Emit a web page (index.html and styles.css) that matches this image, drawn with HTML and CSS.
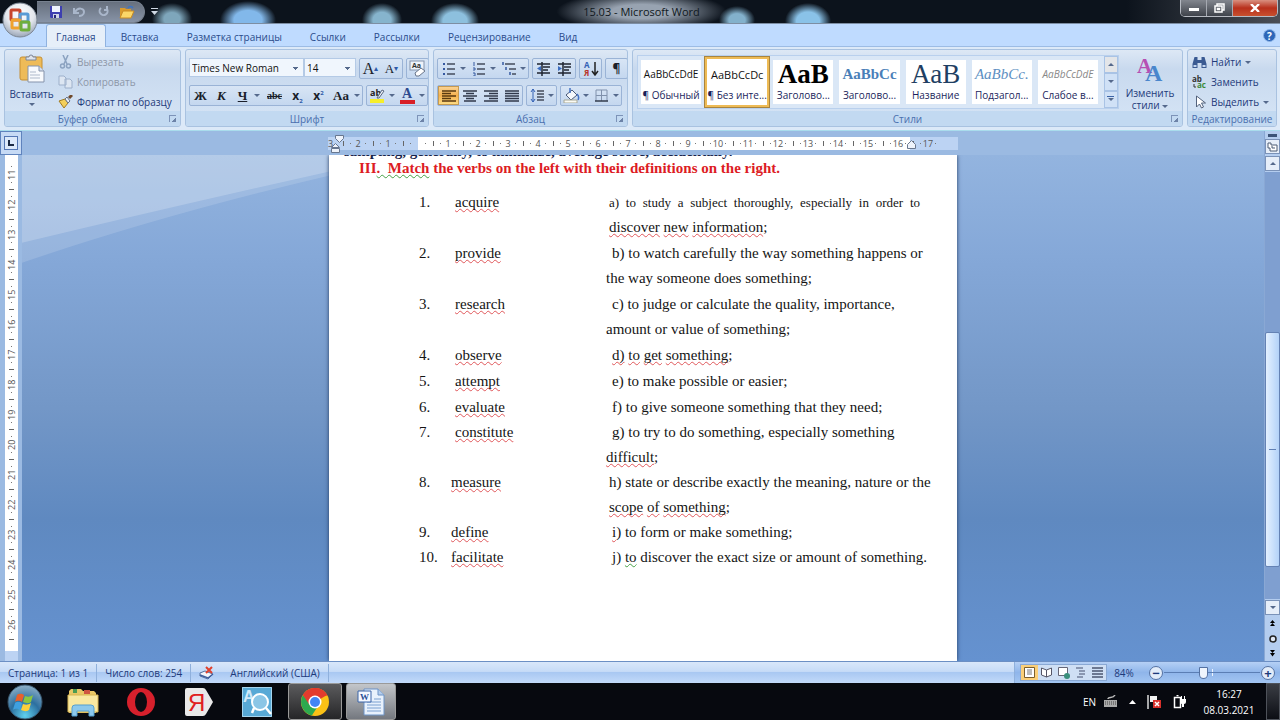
FILE: index.html
```html
<!DOCTYPE html>
<html lang="ru">
	<head>
		<meta charset="utf-8" />
		<title>15.03 - Microsoft Word</title>
		<link rel="stylesheet" href="styles.css">
	</head>
	<body>
		<header class="titlebar">
			<button class="office" aria-label="Office">
				<svg width="36" height="36" viewBox="0 0 36 36"><defs><radialGradient id="orb" cx=".5" cy=".3" r=".7"><stop offset="0" stop-color="#fff"/><stop offset=".6" stop-color="#e3e6ec"/><stop offset="1" stop-color="#9aa6b8"/></radialGradient></defs><circle cx="18" cy="18" r="17" fill="url(#orb)" stroke="#7d8794"/><g fill="none" stroke-width="3"><rect x="9" y="8" width="9" height="10" rx="1" stroke="#c8452c"/><rect x="18" y="12" width="8" height="8" rx="1" stroke="#5a9bd5"/><rect x="10" y="18" width="8" height="8" rx="1" stroke="#f0a22e"/><rect x="19" y="20" width="8" height="8" rx="1" stroke="#6fae3c"/></g></svg>
			</button>
			<div class="quick">
				<button aria-label="Сохранить"><svg width="14" height="14" viewBox="0 0 14 14"><path d="M1 1h12v12H2l-1-1z" fill="#3d3fb0"/><path d="M3 1h8v6H3z" fill="#eef3ff"/><path d="M4 9h6v4H4z" fill="#cfd6e6"/><path d="M5 10h2v3H5z" fill="#26277a"/></svg></button>
				<button aria-label="Отменить"><svg width="16" height="12" viewBox="0 0 16 12" fill="none" stroke="#a9b6ca" stroke-width="2"><path d="M2 2v5h5M3 6c3-5 9-4 9 0 0 3-3 4-5 4"/></svg></button>
				<button aria-label="Вернуть"><svg width="12" height="12" viewBox="0 0 12 12" fill="none" stroke="#a9b6ca" stroke-width="2"><path d="M3 2a4 4 0 1 0 6 1M9 0v4H6"/></svg></button>
				<button aria-label="Открыть"><svg width="16" height="14" viewBox="0 0 16 14"><path d="M1 3h5l1 1h5v3H4l-3 6z" fill="#d99a2b"/><path d="M4 6h11l-3 7H1z" fill="#fbd768" stroke="#c98b23"/><path d="M9 3c1-2 4-2 5 0" fill="none" stroke="#3b73c4" stroke-width="1.5"/></svg></button>
			</div>
			<button class="more" aria-label="Настройка панели"><svg width="7" height="7" viewBox="0 0 7 7"><path d="M0 0h7v1H0zM0 3h7L3.500 7z" fill="#cfd8e4"/></svg></button>
			<h1>15.03 - Microsoft Word</h1>
			<div class="winbtns">
				<button aria-label="Свернуть"><svg width="10" height="8" viewBox="0 0 10 8"><path d="M0 4h10v3H0z" fill="#fff"/></svg></button>
				<button aria-label="Развернуть"><svg width="11" height="10" viewBox="0 0 11 10" fill="none" stroke="#fff" stroke-width="1.500"><path d="M3 3V1h7v6H8M1 3h7v6H1zM3.500 5.500h2v1h-2z"/></svg></button>
				<button class="close" aria-label="Закрыть"><svg width="10" height="8" viewBox="0 0 10 8" stroke="#fff" stroke-width="2.400"><path d="M1 0l8 8M9 0L1 8"/></svg></button>
			</div>
		</header>

		<nav class="tabs">
			<a href="#" class="current">Главная</a>
			<a href="#">Вставка</a>
			<a href="#">Разметка страницы</a>
			<a href="#">Ссылки</a>
			<a href="#">Рассылки</a>
			<a href="#">Рецензирование</a>
			<a href="#">Вид</a>
			<button class="help" aria-label="Справка">?</button>
		</nav>

		<section class="ribbon">
			<div class="group clipboard">
				<div class="body">
					<button class="paste">
						<svg width="26" height="29" viewBox="0 0 26 29"><rect x="1" y="3" width="22" height="23" rx="2" fill="#eebb58" stroke="#c58f34"/><path d="M7 5V3h3a2 2 0 0 1 4 0h3v3H7z" fill="#dfe3ea" stroke="#7b8598"/><path d="M9 12h11l5 5v11H9z" fill="#f8fafd" stroke="#8593ab"/><path d="M20 12v5h5" fill="#d5deeb" stroke="#8593ab"/><path d="M11 18h6M11 21h10M11 24h10" stroke="#aeb9ca"/></svg>
						<span>Вставить</span><i class="arr"></i>
					</button>
					<div class="stack">
						<button class="off"><svg width="15" height="14" viewBox="0 0 15 14" fill="none" stroke="#8ba2c0" stroke-width="1.500"><path d="M5 0l4 9M10 0L6 9"/><circle cx="4.500" cy="11" r="2"/><circle cx="10.500" cy="11" r="2"/></svg>Вырезать</button>
						<button class="off"><svg width="15" height="14" viewBox="0 0 15 14" fill="#dde6f2" stroke="#9db0cb"><path d="M1 1h5l2 2v7H1zM7 4h5l2 2v7H7z"/></svg>Копировать</button>
						<button><svg width="15" height="14" viewBox="0 0 15 14"><path d="M1 6l6-2 3 4-4 5z" fill="#f3cf5c" stroke="#a17b22"/><path d="M7 4l3 4 2-2-3-4z" fill="#e8edf5" stroke="#66748b"/><path d="M11 3l3-3" stroke="#704a2b" stroke-width="3"/></svg>Формат по образцу</button>
					</div>
				</div>
				<div class="caption">Буфер обмена<i class="launch"></i></div>
			</div>

			<div class="group font">
				<div class="body rows">
					<div class="row">
						<div class="combos">
							<select class="face" aria-label="Шрифт"><option>Times New Roman</option></select>
							<select class="size" aria-label="Размер шрифта"><option>14</option></select>
						</div>
						<div class="box"><button class="serif big">A<sup>▴</sup></button><button class="serif">A<sup>▾</sup></button></div>
						<div class="box"><button aria-label="Очистить формат"><svg width="18" height="17" viewBox="0 0 18 17"><rect x="1" y="1" width="14" height="9" fill="#eef3fa" stroke="#8493ab"/><text x="3" y="8" class="tiny">Aa</text><path d="M6 13l6-5 4 3-6 5H7z" fill="#fff" stroke="#69758a"/></svg></button></div>
					</div>
					<div class="row">
						<div class="box">
							<button class="serif"><b>Ж</b></button><button class="serif"><b><em>К</em></b></button><button class="serif"><b><u>Ч</u></b></button><i class="arr"></i><button class="serif small wide"><b><s>abc</s></b></button><button class="sub"><b>x<sub>2</sub></b></button><button class="sub"><b>x<sup>2</sup></b></button><button class="serif aa"><b>Aa</b></button><i class="arr"></i>
						</div>
						<div class="box">
							<button aria-label="Цвет выделения"><svg width="17" height="17" viewBox="0 0 17 17"><text x="1" y="9" class="ab">ab</text><path d="M8 11l5-8 2 1-5 7z" fill="#eef3fa" stroke="#5a6780"/><path d="M1 12h14v4H1z" fill="#f6ee2a"/></svg></button><i class="arr"></i>
							<button aria-label="Цвет текста"><svg width="17" height="17" viewBox="0 0 17 17"><text x="3" y="11" class="colora">A</text><path d="M1 13h15v4H1z" fill="#d81f26"/></svg></button><i class="arr"></i>
						</div>
					</div>
				</div>
				<div class="caption">Шрифт<i class="launch"></i></div>
			</div>

			<div class="group para">
				<div class="body rows">
					<div class="row">
						<div class="box">
							<button aria-label="Маркеры"><svg width="14" height="14" viewBox="0 0 14 14"><path d="M1 1h2v2H1zM1 6h2v2H1zM1 11h2v2H1z" fill="#3558a0"/><path d="M5 2h8M5 7h8M5 12h8" stroke="#444c5c" stroke-width="1.500"/></svg></button><i class="arr"></i>
							<button aria-label="Нумерация"><svg width="14" height="14" viewBox="0 0 14 14"><path d="M2 0v4M1 6h2v2H1M1 11h2v3H1" fill="none" stroke="#3558a0"/><path d="M5 2h8M5 7h8M5 12h8" stroke="#444c5c" stroke-width="1.500"/></svg></button><i class="arr"></i>
							<button aria-label="Многоуровневый список"><svg width="16" height="14" viewBox="0 0 16 14"><path d="M2 0v3M5 5v3M9 10v3" stroke="#3558a0" stroke-width="1.500"/><path d="M4 2h10M8 7h7M11 12h4" stroke="#444c5c" stroke-width="1.500"/></svg></button><i class="arr"></i>
						</div>
						<div class="box"><button aria-label="Уменьшить отступ"><svg width="15" height="14" viewBox="0 0 15 14"><path d="M1 2h13M7 5h7M7 8h5M1 11h13M6 0v14" stroke="#1f2530" stroke-width="1.500"/><path d="M5 4v5L1 6.500z" fill="#3b6cc0"/></svg></button><button aria-label="Увеличить отступ"><svg width="15" height="14" viewBox="0 0 15 14"><path d="M1 2h13M7 5h7M7 8h5M1 11h13M6 0v14" stroke="#1f2530" stroke-width="1.500"/><path d="M1 4v5l4-2.500z" fill="#3b6cc0"/></svg></button></div>
						<div class="box"><button aria-label="Сортировка"><svg width="16" height="18" viewBox="0 0 16 18"><text x="1" y="8" class="sorta">А</text><text x="1" y="16" class="sortb">Я</text><path d="M12 2v12M9 11l3 4 3-4" fill="none" stroke="#222" stroke-width="1.500"/></svg></button></div>
						<div class="box"><button><b>¶</b></button></div>
					</div>
					<div class="row">
						<div class="box">
							<button class="on" aria-label="По левому краю"><svg width="14" height="12" viewBox="0 0 14 12"><path d="M0 1h14M0 3.500h9M0 6h14M0 8.500h9M0 11h14" stroke="#5a3a10" stroke-width="1.500"/></svg></button><button aria-label="По центру"><svg width="14" height="12" viewBox="0 0 14 12"><path d="M0 1h14M3 3.500h8M0 6h14M3 8.500h8M1 11h12" stroke="#30384a" stroke-width="1.500"/></svg></button><button aria-label="По правому краю"><svg width="14" height="12" viewBox="0 0 14 12"><path d="M0 1h14M5 3.500h9M0 6h14M5 8.500h9M0 11h14" stroke="#30384a" stroke-width="1.500"/></svg></button><button aria-label="По ширине"><svg width="14" height="12" viewBox="0 0 14 12"><path d="M0 1h14M0 3.500h14M0 6h14M0 8.500h14M0 11h14" stroke="#30384a" stroke-width="1.500"/></svg></button>
						</div>
						<div class="box"><button class="narrow" aria-label="Интервал"><svg width="14" height="15" viewBox="0 0 14 15"><path d="M3 1v13M1 4l2-3 2 3M1 11l2 3 2-3" fill="none" stroke="#3562b5"/><path d="M7 3h7M7 6h7M7 9h7M7 12h7" stroke="#444c5c" stroke-width="1.500"/></svg></button><i class="arr"></i></div>
						<div class="box"><button aria-label="Заливка"><svg width="17" height="15" viewBox="0 0 17 15"><path d="M3 7l6-5 5 5-6 5z" fill="#f5f8fc" stroke="#4a5a78"/><path d="M7 5V0M14 6c2 2 2 4 1 6" fill="none" stroke="#4473c5" stroke-width="1.500"/><path d="M1 12h13v3H1z" fill="#fbfbf4" stroke="#a8a897"/></svg></button><i class="arr"></i><button aria-label="Границы"><svg width="13" height="13" viewBox="0 0 13 13" fill="none"><path d="M1 1h11v11M1 1v11M6.500 1v11M1 6.500h11" stroke="#8091ac"/><path d="M0 12h13" stroke="#333b4c" stroke-width="1.500"/></svg></button><i class="arr"></i></div>
					</div>
				</div>
				<div class="caption">Абзац<i class="launch"></i></div>
			</div>

			<div class="group styles">
				<div class="body">
					<div class="gallery">
						<button><span class="sample">AaBbCcDdE</span><span>¶ Обычный</span></button>
						<button class="picked"><span class="sample">AaBbCcDc</span><span>¶ Без инте...</span></button>
						<button><span class="sample h1">AaB</span><span>Заголово...</span></button>
						<button><span class="sample h2">AaBbCc</span><span>Заголово...</span></button>
						<button><span class="sample ttl">AaB</span><span>Название</span></button>
						<button><span class="sample subt">AaBbCc.</span><span>Подзагол...</span></button>
						<button><span class="sample weak">AaBbCcDdE</span><span>Слабое в...</span></button>
						<div class="spin"><button aria-label="Вверх"><i class="arr up"></i></button><button aria-label="Вниз"><i class="arr"></i></button><button class="all" aria-label="Ещё"><i class="arr"></i></button></div>
					</div>
					<button class="change"><svg width="30" height="28" viewBox="0 0 30 28"><text x="2" y="18" class="a1">A</text><text x="10" y="26" class="a2">A</text></svg><span>Изменить<br>стили <i class="arr"></i></span></button>
				</div>
				<div class="caption">Стили<i class="launch"></i></div>
			</div>

			<div class="group edit">
				<div class="body">
					<div class="stack">
						<button><svg width="15" height="13" viewBox="0 0 14 13" fill="#3a5a92"><path d="M2 1h3v3h4V1h3l2 7v4H9V7H5v5H0V8z"/><path d="M1 9h3v2H1zM10 9h3v2h-3z" fill="#c4d6f0"/></svg>Найти <i class="arr"></i></button>
						<button><svg width="15" height="14" viewBox="0 0 15 14"><text x="0" y="7" class="rep">ab</text><text x="5" y="13" class="rep g">ac</text><path d="M2 9v3h2" fill="none" stroke="#333"/></svg>Заменить</button>
						<button><svg width="15" height="14" viewBox="0 0 14 14"><path d="M4 1v11l3-3 2 4 2-1-2-4h4z" fill="#fff" stroke="#53627c"/></svg>Выделить <i class="arr"></i></button>
					</div>
				</div>
				<div class="caption">Редактирование</div>
			</div>
		</section>

		<main class="work">
			<div class="leftcol">
				<button class="corner" aria-label="Табуляция"><b><svg width="6" height="6" viewBox="0 0 6 6"><path d="M1 0v5h5" fill="none" stroke="#1b2a44" stroke-width="2"/></svg></b></button>
				<div class="vruler"><i>11</i><i>12</i><i>13</i><i>14</i><i>15</i><i>16</i><i>17</i><i>18</i><i>19</i><i>20</i><i>21</i><i>22</i><i>23</i><i>24</i><i>25</i><i>26</i></div>
			</div>
			<div class="midcol">
				<div class="hruler">
					<div class="scale"><i class="edge">3</i><i>2</i><i>1</i><i></i><i>1</i><i>2</i><i>3</i><i>4</i><i>5</i><i>6</i><i>7</i><i>8</i><i>9</i><i>10</i><i>11</i><i>12</i><i>13</i><i>14</i><i>15</i><i>16</i><i>17</i>
						<svg class="indent first" width="13" height="19" viewBox="0 0 13 19" fill="#eef3fb" stroke="#68778f"><path d="M4.500.5h8v3l-4 4-4-4zM.5 12.500l4-4 4 4zM.5 13.500h8v4h-8z"/></svg>
						<svg class="indent last" width="9" height="9" viewBox="0 0 9 9" fill="#eef3fb" stroke="#68778f"><path d="M.5 8.500v-4l4-4 4 4v4z"/></svg>
					</div>
				</div>
				<div class="canvas">
					<svg class="wave" viewBox="0 0 1243 507" preserveAspectRatio="none"><path d="M0 0H620L310 16Q150 52 0 88z" fill="#fff" opacity=".2"/><path d="M0 0H620L310 20Q140 60 0 108z" fill="#fff" opacity=".14"/></svg>
					<article class="page">
						<p class="cut">sampling, generally, to minimize, average score, accidentally.</p>
						<h2>III<span class="gr">.&nbsp; Match</span> the verbs on the left with their definitions on the right.</h2>
						<table>
							<tr><td>1.</td><td><u>acquire</u></td><td class="in"><span class="spread">a) to study a subject thoroughly, especially in order to</span><u>discover</u> <u>new</u> <u>information</u>;</td></tr>
							<tr><td>2.</td><td><u>provide</u></td><td class="hang">b) to watch carefully the way something happens or<br>the way someone does something;</td></tr>
							<tr><td>3.</td><td><u>research</u></td><td class="hang">c) to judge or calculate the quality, importance,<br>amount or value of something;</td></tr>
							<tr><td>4.</td><td><u>observe</u></td><td class="hang"><u>d)</u> <u>to</u> <u>get</u> <u>something</u>;</td></tr>
							<tr><td>5.</td><td><u>attempt</u></td><td class="hang">e) to make possible or easier;</td></tr>
							<tr><td>6.</td><td><u>evaluate</u></td><td class="hang">f) to give someone something that they need;</td></tr>
							<tr><td>7.</td><td><u>constitute</u></td><td class="hang">g) to try to do something, especially something<br><u>difficult</u>;</td></tr>
							<tr class="shift"><td>8.</td><td><u>measure</u></td><td class="in">h) state or describe exactly the meaning, nature or the<br><u>scope</u> <u>of</u> <u>something</u>;</td></tr>
							<tr class="shift"><td>9.</td><td><u>define</u></td><td class="hang"><u>i</u>) to form or make something;</td></tr>
							<tr class="shift"><td>10.</td><td><u>facilitate</u></td><td class="hang">j) <span class="gr">to</span> discover the exact size or amount of something.</td></tr>
						</table>
					</article>
				</div>
			</div>
			<div class="scroll">
				<i class="split"></i>
				<button aria-label="Линейка"><svg width="11" height="10" viewBox="0 0 11 10" fill="#fff" stroke="#4d5c75"><path d="M1 1h3v2h6v6H3V6H1zM5 4v2h3"/></svg></button>
				<button aria-label="Вверх"><i class="arr up"></i></button>
				<div class="track"><div class="thumb"></div></div>
				<button aria-label="Вниз"><i class="arr"></i></button>
				<button class="flat" aria-label="Предыдущая"><svg width="7" height="7" viewBox="0 0 7 7"><path d="M3.500 0L6 3H1zM3.500 3L6 6H1z"/></svg></button>
				<button class="flat" aria-label="Выбор объекта"><svg width="8" height="8" viewBox="0 0 8 8"><circle cx="4" cy="4" r="3" fill="#dfe8f5" stroke="#222" stroke-width="1.500"/></svg></button>
				<button class="flat" aria-label="Следующая"><svg width="7" height="7" viewBox="0 0 7 7"><path d="M3.500 3L6 0H1zM3.500 6.500L6 3H1z"/></svg></button>
			</div>
		</main>

		<footer class="status">
			<span>Страница: 1 из 1</span>
			<span>Число слов: 254</span>
			<span class="lang"><svg width="16" height="14" viewBox="0 0 16 14"><path d="M1 7l5-2 8 3-5 5-8-3z" fill="#f3f6fb" stroke="#56719f"/><path d="M1 9l8 3 5-4" fill="none" stroke="#3e5f9e" stroke-width="1.500"/><path d="M7 1l6 6M13 1L7 7" stroke="#e0402c" stroke-width="2"/></svg>Английский (США)</span>
			<div class="right">
				<div class="views">
					<button class="on" aria-label="Разметка"><svg width="11" height="11" viewBox="0 0 11 11"><path d="M.5.5h10v10H.5z" fill="#fff" stroke="#7b5f2d"/><path d="M3 3h5M3 5h5M3 7h5" stroke="#777"/></svg></button>
					<button aria-label="Чтение"><svg width="12" height="11" viewBox="0 0 12 11"><path d="M.5 1l5 2 5-2v7l-5 2-5-2zM5.500 3v7" fill="#fff" stroke="#556"/></svg></button>
					<button aria-label="Веб"><svg width="12" height="12" viewBox="0 0 12 12"><path d="M.5.5h9v8h-9z" fill="#fff" stroke="#667"/><circle cx="9" cy="9" r="3" fill="#3a8f7b"/></svg></button>
					<button aria-label="Структура"><svg width="11" height="11" viewBox="0 0 11 11"><path d="M1 1h7M4 4h6M4 7h6M2 10h6" stroke="#74809a" stroke-width="1.500"/></svg></button>
					<button aria-label="Черновик"><svg width="11" height="11" viewBox="0 0 11 11"><path d="M0 1h11M0 4h11M0 7h11M0 10h11" stroke="#6c7891" stroke-width="2"/></svg></button>
				</div>
				<button class="pct">84%</button>
				<button class="round" aria-label="Уменьшить">−</button>
				<input type="range" min="0" max="100" value="40" aria-label="Масштаб">
				<button class="round" aria-label="Увеличить">+</button>
			</div>
		</footer>

		<footer class="taskbar">
			<button class="task start" aria-label="Пуск"><svg width="36" height="36" viewBox="0 0 36 36"><defs><radialGradient id="st" cx=".5" cy=".9" r=".9"><stop offset="0" stop-color="#5fd0ee"/><stop offset=".5" stop-color="#2c6f9f"/><stop offset="1" stop-color="#8fb0c8"/></radialGradient></defs><circle cx="18" cy="18" r="17" fill="url(#st)" stroke="#36546b"/><path d="M10 11c3-2 5-1 7 0l-2 7c-2-1-4-2-7 0z" fill="#e8602c"/><path d="M18 12c3 1 5 1 8-1l-2 7c-3 2-5 1-8 0z" fill="#8cc63f"/><path d="M8 19c3-2 5-1 7 0l-2 7c-2-1-4-2-7 0z" fill="#3fa0e0"/><path d="M16 20c3 1 5 1 8-1l-2 7c-3 2-5 1-8 0z" fill="#fcd03a"/></svg></button>
			<button class="task" aria-label="Проводник"><svg width="32" height="30" viewBox="0 0 32 30"><path d="M2 4l2-2h10l2 2h11l2 2v20H2z" fill="#e9c765"/><path d="M6 2h4v4H6z" fill="#4c9b52"/><path d="M17 3h6v4h-6z" fill="#cf5540"/><path d="M1 8h30v17H1z" fill="#f9e8a0" stroke="#d8b552"/><path d="M5 29v-8q0-3 3-3h16q3 0 3 3v8h-5v-5H10v5z" fill="#8cc8ec" stroke="#559fcf"/></svg></button>
			<button class="task" aria-label="Opera"><svg width="30" height="30" viewBox="0 0 30 30"><ellipse cx="15" cy="15" rx="14" ry="14" fill="#d6202c"/><ellipse cx="15" cy="15" rx="6" ry="10" fill="#0a0c12"/></svg></button>
			<button class="task" aria-label="Яндекс"><svg width="30" height="30" viewBox="0 0 30 30"><path d="M3 1h16q2 0 3 2l7 12-7 12q-1 2-3 2H3q-2 0-2-2V3q0-2 2-2z" fill="#e9e9e9"/><text x="4" y="24" class="ya">Я</text></svg></button>
			<button class="task" aria-label="Поиск"><svg width="30" height="30" viewBox="0 0 30 30"><path d="M0 0h30v30H0z" fill="#58a9d6"/><path d="M.5.500h29v29H.5z" fill="none" stroke="#a6d6f0"/><text x="1" y="15" class="aq">A</text><circle cx="18" cy="15" r="8" fill="#8cc6e6" stroke="#fff" stroke-width="2"/><path d="M24 21l5 6M12 21l-2 5" stroke="#fff" stroke-width="2.500"/></svg></button>
			<button class="task open" aria-label="Chrome"><svg width="30" height="30" viewBox="0 0 30 30"><circle cx="15" cy="15" r="14" fill="#fbc116"/><path d="M15 15L2.900 8A14 14 0 0 1 27.100 8z" fill="#e33b2e"/><path d="M2.900 8a14 14 0 0 0 9 20.600L18 19 10 16z" fill="#2da94f"/><path d="M15 8.500h12.500A14 14 0 0 0 2.900 8l6 9z" fill="#e33b2e"/><circle cx="15" cy="15" r="6.500" fill="#fff"/><circle cx="15" cy="15" r="5" fill="#4285f4"/></svg></button>
			<button class="task open active" aria-label="Word"><svg width="28" height="28" viewBox="0 0 28 28"><path d="M7 1h14l6 6v20H7z" fill="#e8f1fc" stroke="#6c93c6"/><path d="M21 1v6h6" fill="#b4cdec" stroke="#6c93c6"/><path d="M10 14h14M10 17h14M10 20h14M10 23h14M17 11h7" stroke="#7ba0d0"/><path d="M1 3h13v11H1z" fill="#f4f8ff" stroke="#3b64a8"/><text x="3" y="12" class="w">W</text></svg></button>
			<div class="tray">
				<span>EN</span>
				<svg width="15" height="13" viewBox="0 0 15 13"><path d="M1 5h13v7H1z" fill="#aaa"/><path d="M2 7h11M2 9h11" stroke="#444" stroke-dasharray="1 1"/><path d="M5 4c0-3 5 0 7-4" fill="none" stroke="#bbb" stroke-width="1.500"/></svg>
				<svg width="7" height="4" viewBox="0 0 7 4"><path d="M0 4h7L3.500 0z" fill="#fff"/></svg>
				<svg width="15" height="14" viewBox="0 0 15 14"><path d="M1 0v14" stroke="#ddd" stroke-width="1.500"/><path d="M3 1h7v6H3z" fill="#f2f2f2"/><path d="M6 5h8v8H6z" fill="#d8302a"/><path d="M8 7l4 4M12 7l-4 4" stroke="#fff" stroke-width="1.500"/></svg>
				<svg width="14" height="14" viewBox="0 0 14 14"><path d="M1.500 2.500h6v10h-6zM3.500.5h2" fill="none" stroke="#fff" stroke-width="1.500"/><path d="M7 4h6v3q0 2-2 2v3H9V9Q7 9 7 7zM8 1h1v3H8zM11 1h1v3h-1z" fill="#fff"/></svg>
			</div>
			<div class="clock">16:27<br>08.03.2021</div>
			<button class="desk" aria-label="Рабочий стол"></button>
		</footer>
	</body>
</html>
```
FILE: styles.css
```css
*{box-sizing:border-box;}
body{margin:0;height:100vh;display:flex;flex-direction:column;overflow:hidden;font:10px/14px "Open Sans","Noto Sans",sans-serif;color:#1e3a7a;background:#bfdbff;}
button{font:inherit;color:inherit;background:none;border:0;padding:0;margin:0;display:flex;align-items:center;justify-content:center;white-space:nowrap;}
svg{display:block;flex:none;}
i{font-style:normal;}
.arr{display:inline-block;flex:none;border:3px solid transparent;border-top-color:#55698c;border-bottom:0;vertical-align:middle;}
.arr.up{border:3px solid transparent;border-bottom-color:#55698c;border-top:0;}

/* title */
.titlebar{position:relative;flex:none;height:24px;display:flex;align-items:center;border-bottom:1px solid #7d8ea3;background:radial-gradient(ellipse 20px 16px at 172px 19px,#7ea6bb 40%,transparent),radial-gradient(ellipse 28px 19px at 248px 20px,#82b8ea 50%,transparent),radial-gradient(ellipse 20px 17px at 382px 20px,#86b4cd 45%,transparent),radial-gradient(ellipse 24px 18px at 455px 21px,#8dc0de 50%,transparent),radial-gradient(ellipse 18px 14px at 737px 20px,#83b1cc 45%,transparent),radial-gradient(ellipse 23px 18px at 808px 21px,#8ac2e8 50%,transparent),linear-gradient(90deg,#0c131c 88%,#4b4f57);}
.titlebar h1{flex:1;margin:0 60px 0 0;font-size:11px;font-weight:400;line-height:23px;color:#101820;text-align:center;background:radial-gradient(ellipse 85px 20px at 50% 50%,#98a3b1 35%,transparent);}
.office{position:absolute;left:2px;top:2px;z-index:2;}
.quick{display:flex;align-items:center;justify-content:space-between;width:108px;height:22px;margin-left:37px;padding:0 9px 0 12px;border:1px solid #77818f;border-left:0;border-radius:0 12px 12px 0;background:linear-gradient(#67707e,#8793a6);}
.more{width:18px;}
.winbtns{display:flex;align-self:flex-start;height:17px;width:98px;margin-right:2px;border:1px solid #b6bac2;border-top:0;border-radius:0 0 5px 5px;overflow:hidden;}
.winbtns button{width:26px;background:linear-gradient(#82868e,#3f434b);border-right:1px solid #a5a9b1;}
.winbtns .close{flex:1;border:0;background:linear-gradient(#d99080,#b8301c 50%,#c8502e);}

/* tabs */
.tabs{flex:none;display:flex;height:23px;padding-left:46px;background:#bfdbff;border-bottom:1px solid #9dbce4;}
.tabs a{padding:0 14px;line-height:26px;color:#2b4c8c;text-decoration:none;white-space:nowrap;}
.tabs .current{padding:0 9px;margin-right:1px;border:1px solid #8fb2e0;border-bottom:0;border-radius:3px 3px 0 0;background:#e6eff9;line-height:24px;margin-bottom:-1px;}
.help{width:13px;height:13px;margin:5px 4px 0 auto;border-radius:50%;background:#2d66b8;border:1px solid #8db4e6;color:#fff;font-weight:700;}

/* ribbon */
.ribbon{flex:none;display:flex;gap:4px;height:84px;padding:2px 3px 3px 4px;background:#dce9f8;border-bottom:1px solid #a9dcec;}
.group{display:flex;flex-direction:column;border:1px solid #a9c2e0;border-radius:3px;background:linear-gradient(#dde8f5,#c8d9ee 25%,#d6e5f6);overflow:hidden;}
.group .body{flex:1;display:flex;min-height:0;}
.caption{position:relative;flex:none;height:15px;line-height:17px;text-align:center;color:#4a6fae;background:#c2d9f1;}
.launch{position:absolute;right:4px;top:4px;width:7px;height:7px;border:1px solid #7d93b8;border-right:0;border-bottom:0;background:linear-gradient(135deg,transparent 60%,#6d83a8 60%);}
.clipboard{width:177px;flex:none;}
.font{width:244px;flex:none;}
.para{width:195px;flex:none;}
.styles{flex:1;min-width:0;}
.edit{width:90px;flex:none;}
.paste{width:53px;flex-direction:column;justify-content:flex-start;padding-top:4px;}
.paste span{line-height:17px;margin-top:3px;}
.stack{display:flex;flex-direction:column;gap:6px;padding-top:5px;}
.stack button{height:14px;gap:4px;justify-content:flex-start;}
.stack .off{color:#8d97a8;}
.edit .stack{padding-left:4px;}
.rows{flex-direction:column;gap:6px;padding:8px 0 0 3px;}
.row{display:flex;gap:3px;height:21px;}
.combos{display:flex;}
select{appearance:none;height:19px;padding:0 2px;border:1px solid #b4cae6;border-radius:0;color:#111;font:inherit;background:linear-gradient(#55698c,#55698c) right 5px top 8px/5px 1px no-repeat,linear-gradient(#55698c,#55698c) right 6px top 9px/3px 1px no-repeat,linear-gradient(#55698c,#55698c) right 7px top 10px/1px 1px no-repeat,#f0f6fd;}
.face{width:115px;}
.size{width:52px;}
.box{display:flex;align-items:center;border:1px solid #9ab3d6;border-radius:2px;background:linear-gradient(#d8e5f5,#c4d7ef);}
.box button{width:21px;height:19px;color:#1a1f2b;font-size:12px;}
.box .serif{font-family:"Liberation Serif",serif;font-size:13px;}
.box .big{font-size:16px;}
.box .small{font-size:10px;}
.box .wide{width:25px;}
.box .narrow{width:20px;}
.box .aa{width:24px;}
.box .sub sub,.box .sub sup{font-size:6px;line-height:0;color:#2c59a8;}
.box .serif sup{font-size:8px;line-height:0;color:#2c59a8;}
.box .on{background:linear-gradient(#fbd69a,#f6b24f 50%,#fde08a);box-shadow:inset 0 0 0 1px #c59a52;}
.box .arr{margin:0 2px 0 1px;}
.tiny{font:bold 7px "Open Sans",sans-serif;fill:#333;}
.ab{font:bold 9px "Open Sans",sans-serif;fill:#222;}
.colora{font:bold 14px "Liberation Serif",serif;fill:#2d4a8f;}
.sorta{font:bold 8px "Open Sans",sans-serif;fill:#3460b4;}
.sortb{font:bold 8px "Open Sans",sans-serif;fill:#b8342a;}
.rep{font:bold 8px "Open Sans",sans-serif;fill:#333;}
.rep.g{fill:#3d8b3c;}

.styles .body{padding:5px 5px 2px 4px;gap:4px;}
.gallery{flex:1;display:flex;min-width:0;border:1px solid #b9d0ed;background:#dae7f6;}
.gallery > button{flex:1;min-width:0;flex-direction:column;justify-content:flex-end;margin:4px 3px;background:#fff;overflow:hidden;color:#1b1f5c;}
.gallery > button span{line-height:17px;}
.gallery .sample{flex:1;display:flex;align-items:center;padding-top:2px;color:#111;}
.gallery .picked{margin:0;padding-bottom:1px;border:3px solid #eebb55;outline:1px solid #a8843f;outline-offset:-1px;}
.gallery .picked .sample{font-size:11px;}
.gallery .h1{font:bold 27px/26px "Liberation Serif",serif;color:#000;}
.gallery .h2{font:bold 15px/17px "Liberation Serif",serif;color:#4a7fb8;}
.gallery .ttl{font:27px/26px "Liberation Serif",serif;color:#1f3f63;}
.gallery .subt{font:italic 15px/17px "Liberation Serif",serif;color:#5d8fc2;}
.gallery > button .h1,.gallery > button .ttl{line-height:26px;}
.gallery .weak{font-style:italic;color:#888;}
.spin{display:flex;flex-direction:column;width:14px;margin-left:3px;}
.spin button{flex:1;border:1px solid #a9c3e5;background:#d0e1f6;}
.spin button:first-child{background:#e3e5e8;}
.spin .all{background:linear-gradient(#3c64a8,#3c64a8) 50% 4px/7px 1px no-repeat,#d0e1f6;}
.change{width:54px;flex-direction:column;justify-content:flex-start;}
.change span{line-height:12px;margin-top:4px;}
.a1{font:bold 21px "Liberation Serif",serif;fill:#b64fb3;}
.a2{font:bold 24px "Liberation Serif",serif;fill:#4a86cc;}

/* workspace */
.work{flex:1;display:flex;min-height:0;background:#9bbae2;}
.leftcol{width:22px;flex:none;display:flex;flex-direction:column;overflow:hidden;}
.corner{flex:none;height:24px;border:1px solid #5f83bd;background:#c6daf5;}
.corner b{display:flex;align-items:center;justify-content:center;width:14px;height:14px;border:1px solid #5477b4;background:#dce9fa;}
.vruler{flex:1;min-height:0;margin:0 4px 0 5px;padding-top:5px;background:linear-gradient(0deg,#bcd3f3 10px,#fff 10px);overflow:hidden;}
.vruler i{display:block;height:30px;width:13px;writing-mode:vertical-rl;transform:rotate(180deg);line-height:13px;text-align:center;font-size:9px;color:#555;background:linear-gradient(#666,#666) 4px 0/5px 1px no-repeat,linear-gradient(#777,#777) 6px 7px/1px 1px no-repeat,linear-gradient(#777,#777) 6px 23px/1px 1px no-repeat;}
.midcol{flex:1;min-width:0;display:flex;flex-direction:column;}
.hruler{flex:none;height:24px;padding-top:6px;}
.scale{position:relative;display:flex;width:630px;height:13px;margin:0 auto;background:linear-gradient(90deg,#bcd3f3 90px,#fff 90px,#fff 582px,#bcd3f3 582px);}
.scale i{width:30px;text-align:center;font-size:9px;line-height:13px;color:#555;background:linear-gradient(#666,#666) 0 4px/1px 5px no-repeat,linear-gradient(#777,#777) 7px 6px/1px 1px no-repeat,linear-gradient(#777,#777) 22px 6px/1px 1px no-repeat;}
.scale .edge{width:15px;text-align:left;background:none;}
.indent{position:absolute;}
.first{left:3px;top:-2px;}
.last{left:579px;top:3px;}
.canvas{position:relative;flex:1;min-height:0;display:flex;justify-content:center;overflow:hidden;background:linear-gradient(#93b4df,#85a8d8 20%,#7397c7 50%,#5f89c0 72%,#6592d0);}
.wave{position:absolute;left:0;top:0;width:100%;height:100%;}
.page{position:relative;width:628px;background:#fff;box-shadow:0 0 4px #22395f;color:#141414;font:15px/25px "Liberation Serif","Times New Roman",serif;}
.page .cut{margin:-12px 0 0 15px;font-size:15px;line-height:17px;font-weight:700;color:#16234a;}
.page h2{margin:0 0 13px 30px;font-size:15px;line-height:17px;color:#dd1c24;white-space:nowrap;}
.page table{margin-left:90px;border-spacing:0;}
.page td{padding:0 0 1px;vertical-align:top;white-space:nowrap;}
.page tr:nth-child(n+6) td{padding-bottom:0;}
.page td:nth-child(1){width:36px;}
.page td:nth-child(2){width:151px;}
.page .shift td:nth-child(2){text-indent:-4px;}
.page .in{padding-left:3px;}
.page .hang{text-indent:6px;}
.spread{display:block;width:311px;font-size:13px;text-align:justify;text-align-last:justify;}
.page u,.gr{text-decoration:underline wavy #e0575a 1px;text-decoration-skip-ink:none;}
.gr{text-decoration-color:#45a045;}

.scroll{width:16px;flex:none;display:flex;flex-direction:column;align-items:stretch;border-left:1px solid #8aa8d4;background:#b4cdef;}
.split{height:3px;margin:3px 3px 1px;background:#3b5378;}
.scroll button{height:15px;margin:1px 0;border:1px solid #7a92b8;background:#e6eef9;}
.scroll .flat{border:0;background:none;margin:0;}
.track{flex:1;display:flex;flex-direction:column;padding:160px 0 32px;background:#7f9fd0;}
.thumb{flex:1;border:1px solid #6482b4;border-radius:2px;background:linear-gradient(#5f7fb4,#5f7fb4) 50% 50%/7px 1px no-repeat,linear-gradient(90deg,#e3f0ff,#b3d2f8);}

/* status */
.status{flex:none;display:flex;align-items:center;height:22px;border-top:1px solid #6c8fc4;background:linear-gradient(#d9e7fa,#c6dbf7 45%,#a9c8f2 50%,#c3dafa);}
.status > span{padding:0 8px;border-right:1px solid #8fb0dc;line-height:18px;white-space:nowrap;}
.status .lang{display:flex;align-items:center;gap:15px;}
.right{display:flex;align-items:center;align-self:stretch;margin-left:auto;padding:0 5px 0 5px;border-left:1px solid #8fb0dc;background:linear-gradient(#b5d0f5,#8fb5ea 50%,#a3c5f2);}
.views{display:flex;border:1px solid #89a8d4;background:#cfdff4;}
.views button{width:17px;height:15px;}
.views .on{background:#fbcf78;}
.pct{width:34px;}
.round{width:14px;height:14px;border:1px solid #5572a3;border-radius:50%;background:#e2ecf9;font-weight:700;font-size:13px;line-height:10px;}
.status .pct + .round{margin-left:8px;}
input[type=range]{appearance:none;width:96px;height:14px;margin:0 1px;background:linear-gradient(#5b7eb4,#5b7eb4) 0 50%/100% 1px no-repeat,linear-gradient(#eef4fc,#eef4fc) 50% 50%/1px 7px no-repeat;}
input[type=range]::-webkit-slider-thumb{appearance:none;width:9px;height:12px;border:1px solid #5572a3;border-radius:1px 1px 5px 5px;background:#eef4fc;}

/* taskbar */
.taskbar{flex:none;display:flex;align-items:stretch;height:37px;background:#07090f;color:#fff;}
.task{width:58px;}
.start{width:54px;padding-right:4px;}
.open{width:54px;border:1px solid #9a9a9a;border-radius:3px;background:linear-gradient(#5b5b5d,#262628);margin-left:2px;}
.open.active{width:50px;margin-left:4px;background:linear-gradient(#c3c6ca,#74787f);}
.tray{display:flex;align-items:center;gap:11px;margin-left:auto;padding-right:12px;}
.tray span{margin-right:-4px;}
.clock{width:60px;text-align:center;line-height:16px;padding-top:3px;}
.desk{width:14px;margin-left:7px;border:1px solid #4e525a;background:linear-gradient(#3a3d44,#0c0e14);}
.ya{font:24px "Liberation Sans",sans-serif;fill:#e02020;}
.aq{font:bold 16px "Liberation Sans",sans-serif;fill:#cfeafa;}
.w{font:bold 9px "Liberation Serif",serif;fill:#2a4f96;}
```
